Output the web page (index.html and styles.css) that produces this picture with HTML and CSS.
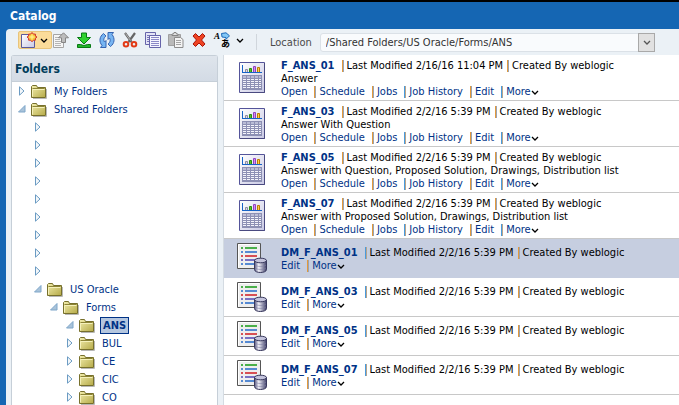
FILE: index.html
```html
<!DOCTYPE html>
<html lang="en">
<head>
  <meta charset="UTF-8">
  <meta name="viewport" content="width=device-width, initial-scale=1">
  <title>Catalog</title>
  <link rel="stylesheet" href="styles.css">
</head>
<body>

  <!-- shared icons -->
  <svg class="sprite" aria-hidden="true">
    <defs>
      <linearGradient id="gold" x1="0" y1="0" x2="1" y2="1">
        <stop offset="0" stop-color="#f3eeae"/><stop offset="1" stop-color="#b5aa48"/>
      </linearGradient>
      <linearGradient id="paper" x1="0" y1="0" x2="1" y2="1">
        <stop offset="0" stop-color="#ffffff"/><stop offset="1" stop-color="#c9c9e4"/>
      </linearGradient>
      <linearGradient id="metal" x1="0" y1="0" x2="1" y2="0">
        <stop offset="0" stop-color="#55557c"/><stop offset=".35" stop-color="#f2f2fa"/><stop offset="1" stop-color="#3d3d66"/>
      </linearGradient>
    </defs>
    <symbol id="folder" viewBox="0 0 16 15">
      <path d="M2 14.5h13.500V5" fill="none" stroke="#b8b8b8"/>
      <path d="M.5 13.500v-11l1-1h4l1 2h8v10z" fill="url(#gold)" stroke="#77702c"/>
      <path d="M1.500 4.500h12" stroke="#8c8435"/>
      <path d="M1.500 12.500v-7h12" fill="none" stroke="#f5f1bb"/>
    </symbol>
    <symbol id="closed" viewBox="0 0 8 10">
      <path d="M1.500 .8v8.400L6 5z" fill="#f3f7fa" stroke="#6b9bc3"/>
    </symbol>
    <symbol id="open" viewBox="0 0 8 10">
      <path d="M7 1.500V8H.5z" fill="#a9c3da" stroke="#7ea6c9"/>
    </symbol>
    <symbol id="chevron" viewBox="0 0 8 5">
      <path d="M1 1l3 3 3-3" fill="none" stroke="currentColor" stroke-width="1.300"/>
    </symbol>
    <symbol id="report" viewBox="0 0 26 31">
      <path d="M.5.5h25v30H.5z" fill="url(#paper)" stroke="#54549a"/>
      <path d="M25.500 1v29.500H1" fill="none" stroke="#4a4a80"/>
      <path d="M3.500 3v7.500H23" fill="none" stroke="#1763c6"/>
      <path d="M6.500 7.500h2v3h-2z" fill="#ddd" stroke="#8a8aa5"/>
      <path d="M10.500 6.500h2v4h-2z" fill="#52c522" stroke="#2c8a12"/>
      <path d="M14.500 4.500h2v6h-2z" fill="#d68af0" stroke="#9044c0"/>
      <path d="M18.500 5.500h2v5h-2z" fill="#ffd04a" stroke="#bd7b00"/>
      <path d="M3 10.500h20" stroke="#1763c6"/>
      <path d="M3 13h20v15H3z" fill="#8d90b4"/>
      <path d="M4 14h3v2H4zm4 0h3v2H8zm4 0h3v2h-3zm4 0h3v2h-3zm4 0h2v2h-2z" fill="#b9bcd6"/>
      <path d="M4 17.500h18M4 19.500h18M4 21.500h18M4 23.500h18M4 25.500h18" stroke="#f4f4fb" stroke-dasharray="3 1"/>
    </symbol>
    <symbol id="model" viewBox="0 0 30 30">
      <path d="M.5.5h23v25H.5z" fill="#eeeeee" stroke="#555"/>
      <path d="M1.500 24.500v-23h21" fill="none" stroke="#fff"/>
      <path d="M8 5h12M4 5h2" stroke="#159a15" stroke-width="1.500"/>
      <path d="M8 9h12M4 9h2" stroke="#2569c9" stroke-width="1.500"/>
      <path d="M8 13h12M4 13h2" stroke="#cf1b22" stroke-width="1.500"/>
      <path d="M8 17h10M4 17h2" stroke="#5148b5" stroke-width="1.500"/>
      <path d="M8 21h9M4 21h2" stroke="#2569c9" stroke-width="1.500"/>
      <path d="M17.500 17.500v9c0 4 12 4 12 0v-9z" fill="url(#metal)" stroke="#37375c"/>
      <ellipse cx="23.500" cy="17.500" rx="6" ry="2.300" fill="#c4c4dc" stroke="#37375c"/>
      <path d="M18 22c2 2 9 2 11 0M18 25c2 2 9 2 11 0" fill="none" stroke="#8080a4" stroke-width=".6"/>
    </symbol>
  </svg>

  <header class="titlebar"><h1>Catalog</h1></header>

  <div class="shell">
    <div class="toolbar">
      <div class="tools">
        <button class="tool tool-new" aria-label="New">
          <svg width="17" height="17" viewBox="0 0 17 17">
            <path d="M1.500 2.500h13v13h-13z" fill="url(#paper)" stroke="#5b5b9b"/>
            <path d="M12 .5l1.400 1.600h2v2L17 5l-1.600 1.200v2h-2L12 9.800l-1.400-1.600h-2v-2L7 5l1.600-.9v-2h2z" fill="#f9c83a" stroke="#d02c30"/>
            <path d="M12 2.500v5M9.500 5h5" stroke="#fff7a0"/>
          </svg>
          <svg width="8" height="5"><use href="#chevron"/></svg>
        </button>
        <button class="tool" aria-label="Up">
          <svg width="16" height="16" viewBox="0 0 16 16">
            <path d="M.5 2.500h10v13H.5z" fill="#f6f6f6" stroke="#a5a5a5"/>
            <path d="M2 5.500h4M2 7.500h5M2 9.500h6M2 11.500h6M2 13.500h6" stroke="#b5b5b5"/>
            <path d="M10.500 .8l5 5h-3v4.700h-4V5.800h-3z" fill="#bdbdbd" stroke="#858585"/>
          </svg>
        </button>
        <button class="tool" aria-label="Download">
          <svg width="16" height="16" viewBox="0 0 16 16">
            <path d="M5.500 1h5v4.500h4L8 12 1.500 5.500h4z" fill="#2fd12f" stroke="#087a14"/>
            <path d="M1.500 12.500h3l3.500 1 3.500-1h3v3h-13z" fill="#22b52b" stroke="#087a14"/>
          </svg>
        </button>
        <button class="tool" aria-label="Refresh">
          <svg width="16" height="16" viewBox="0 0 16 16">
            <path d="M7 15.500H1.500l1.500-2C-.3 9.500.5 4.500 4.500 1.500L7 4c-2.500 2-2.600 4-1.500 6l1.500-1.500z" fill="#77b5f2" stroke="#3563b0"/>
            <path d="M9 .5h5.500l-1.500 2c3.300 4 2.500 9-1.500 12L9 12c2.500-2 2.600-4 1.500-6L9 7.500z" fill="#77b5f2" stroke="#3563b0"/>
          </svg>
        </button>
        <button class="tool" aria-label="Cut">
          <svg width="16" height="16" viewBox="0 0 16 16">
            <path d="M3 1l6.500 9M13 1L6.500 10" stroke="#666" stroke-width="2.200"/>
            <path d="M3.500 1.500l5 7" stroke="#ccc" stroke-width=".8"/>
            <circle cx="4" cy="12.200" r="2.300" fill="none" stroke="#e23a16" stroke-width="2"/>
            <circle cx="12" cy="12.200" r="2.300" fill="none" stroke="#e23a16" stroke-width="2"/>
          </svg>
        </button>
        <button class="tool" aria-label="Copy">
          <svg width="16" height="16" viewBox="0 0 16 16">
            <path d="M.5.5h10v12H.5z" fill="#e4e4f6" stroke="#6664aa"/>
            <path d="M2 3.500h3M2 5.500h3M2 7.500h3M2 9.500h3" stroke="#7775b8"/>
            <path d="M4.500 3.500h11v12h-11z" fill="#f5f5ff" stroke="#6664aa"/>
            <path d="M6 5.500h8M6 7.500h8M6 9.500h8M6 11.500h8M6 13.500h8" stroke="#8a88c6"/>
          </svg>
        </button>
        <button class="tool" aria-label="Paste">
          <svg width="16" height="16" viewBox="0 0 16 16">
            <path d="M.5 2.500h12v11H.5z" fill="#b9b9b9" stroke="#a0a0a0"/>
            <path d="M4 3.500V2h1.500L6 .5h2L8.500 2H10v1.500z" fill="#e4e4e4" stroke="#858585"/>
            <path d="M6.500 5.500h6l2.500 2v8H6.500z" fill="#f4f4f4" stroke="#8c8c8c"/>
            <path d="M8 8.500h5M8 10.500h5M8 12.500h5" stroke="#a5a5a5"/>
          </svg>
        </button>
        <button class="tool" aria-label="Delete">
          <svg width="16" height="16" viewBox="0 0 16 16">
            <path d="M2 4l2.500-2.500L8 5l3.500-3.500L14 4l-3.500 4 3.500 4-2.500 2.500L8 11l-3.500 3.500L2 12l3.500-4z" fill="#ee4322" stroke="#a81509"/>
          </svg>
        </button>
        <button class="tool tool-lang" aria-label="Translate">
          <span class="lang"><i>A</i><b lang="ja">あ</b>
            <svg width="9" height="8" viewBox="0 0 9 8"><path d="M.5 1.500L5 .8l3.500 3L5 7.300V5.500L1 5z" fill="#83c8f7" stroke="#1c68b8"/></svg>
          </span>
          <svg width="8" height="5"><use href="#chevron"/></svg>
        </button>
      </div>
      <div class="location">
        <label for="location">Location</label>
        <div class="combo">
          <select id="location"><option>/Shared Folders/US Oracle/Forms/ANS</option></select>
          <span class="combo-arrow"><svg width="8" height="5"><use href="#chevron"/></svg></span>
        </div>
      </div>
    </div>

    <div class="main">
      <nav class="folders">
        <h2>Folders</h2>
        <ul class="tree">
          <li><div class="node"><svg class="twist"><use href="#closed"/></svg><svg class="folder"><use href="#folder"/></svg><a href="#">My Folders</a></div></li>
          <li>
            <div class="node"><svg class="twist"><use href="#open"/></svg><svg class="folder"><use href="#folder"/></svg><a href="#">Shared Folders</a></div>
            <ul>
              <li><div class="node"><svg class="twist"><use href="#closed"/></svg></div></li>
              <li><div class="node"><svg class="twist"><use href="#closed"/></svg></div></li>
              <li><div class="node"><svg class="twist"><use href="#closed"/></svg></div></li>
              <li><div class="node"><svg class="twist"><use href="#closed"/></svg></div></li>
              <li><div class="node"><svg class="twist"><use href="#closed"/></svg></div></li>
              <li><div class="node"><svg class="twist"><use href="#closed"/></svg></div></li>
              <li><div class="node"><svg class="twist"><use href="#closed"/></svg></div></li>
              <li><div class="node"><svg class="twist"><use href="#closed"/></svg></div></li>
              <li><div class="node"><svg class="twist"><use href="#closed"/></svg></div></li>
              <li>
                <div class="node"><svg class="twist"><use href="#open"/></svg><svg class="folder"><use href="#folder"/></svg><a href="#">US Oracle</a></div>
                <ul>
                  <li>
                    <div class="node"><svg class="twist"><use href="#open"/></svg><svg class="folder"><use href="#folder"/></svg><a href="#">Forms</a></div>
                    <ul>
                      <li><div class="node"><svg class="twist"><use href="#open"/></svg><svg class="folder"><use href="#folder"/></svg><a href="#" class="current">ANS</a></div></li>
                      <li><div class="node"><svg class="twist"><use href="#closed"/></svg><svg class="folder"><use href="#folder"/></svg><a href="#">BUL</a></div></li>
                      <li><div class="node"><svg class="twist"><use href="#closed"/></svg><svg class="folder"><use href="#folder"/></svg><a href="#">CE</a></div></li>
                      <li><div class="node"><svg class="twist"><use href="#closed"/></svg><svg class="folder"><use href="#folder"/></svg><a href="#">CIC</a></div></li>
                      <li><div class="node"><svg class="twist"><use href="#closed"/></svg><svg class="folder"><use href="#folder"/></svg><a href="#">CO</a></div></li>
                    </ul>
                  </li>
                </ul>
              </li>
            </ul>
          </li>
        </ul>
      </nav>

      <div class="items">
        <div class="item">
          <svg class="icon-report"><use href="#report"/></svg>
          <div class="info">
            <div class="meta"><a href="#" class="name">F_ANS_01</a><span>Last Modified 2/16/16 11:04 PM</span><span>Created By weblogic</span></div>
            <p>Answer</p>
            <div class="links"><a href="#">Open</a><a href="#">Schedule</a><a href="#">Jobs</a><a href="#">Job History</a><a href="#">Edit</a><a href="#">More<svg width="8" height="5"><use href="#chevron"/></svg></a></div>
          </div>
        </div>
        <div class="item">
          <svg class="icon-report"><use href="#report"/></svg>
          <div class="info">
            <div class="meta"><a href="#" class="name">F_ANS_03</a><span>Last Modified 2/2/16 5:39 PM</span><span>Created By weblogic</span></div>
            <p>Answer With Question</p>
            <div class="links"><a href="#">Open</a><a href="#">Schedule</a><a href="#">Jobs</a><a href="#">Job History</a><a href="#">Edit</a><a href="#">More<svg width="8" height="5"><use href="#chevron"/></svg></a></div>
          </div>
        </div>
        <div class="item">
          <svg class="icon-report"><use href="#report"/></svg>
          <div class="info">
            <div class="meta"><a href="#" class="name">F_ANS_05</a><span>Last Modified 2/2/16 5:39 PM</span><span>Created By weblogic</span></div>
            <p>Answer with Question, Proposed Solution, Drawings, Distribution list</p>
            <div class="links"><a href="#">Open</a><a href="#">Schedule</a><a href="#">Jobs</a><a href="#">Job History</a><a href="#">Edit</a><a href="#">More<svg width="8" height="5"><use href="#chevron"/></svg></a></div>
          </div>
        </div>
        <div class="item">
          <svg class="icon-report"><use href="#report"/></svg>
          <div class="info">
            <div class="meta"><a href="#" class="name">F_ANS_07</a><span>Last Modified 2/2/16 5:39 PM</span><span>Created By weblogic</span></div>
            <p>Answer with Proposed Solution, Drawings, Distribution list</p>
            <div class="links"><a href="#">Open</a><a href="#">Schedule</a><a href="#">Jobs</a><a href="#">Job History</a><a href="#">Edit</a><a href="#">More<svg width="8" height="5"><use href="#chevron"/></svg></a></div>
          </div>
        </div>
        <div class="item model selected">
          <svg class="icon-model"><use href="#model"/></svg>
          <div class="info">
            <div class="meta"><a href="#" class="name">DM_F_ANS_01</a><span>Last Modified 2/2/16 5:39 PM</span><span>Created By weblogic</span></div>
            <div class="links"><a href="#">Edit</a><a href="#">More<svg width="8" height="5"><use href="#chevron"/></svg></a></div>
          </div>
        </div>
        <div class="item model">
          <svg class="icon-model"><use href="#model"/></svg>
          <div class="info">
            <div class="meta"><a href="#" class="name">DM_F_ANS_03</a><span>Last Modified 2/2/16 5:39 PM</span><span>Created By weblogic</span></div>
            <div class="links"><a href="#">Edit</a><a href="#">More<svg width="8" height="5"><use href="#chevron"/></svg></a></div>
          </div>
        </div>
        <div class="item model">
          <svg class="icon-model"><use href="#model"/></svg>
          <div class="info">
            <div class="meta"><a href="#" class="name">DM_F_ANS_05</a><span>Last Modified 2/2/16 5:39 PM</span><span>Created By weblogic</span></div>
            <div class="links"><a href="#">Edit</a><a href="#">More<svg width="8" height="5"><use href="#chevron"/></svg></a></div>
          </div>
        </div>
        <div class="item model">
          <svg class="icon-model"><use href="#model"/></svg>
          <div class="info">
            <div class="meta"><a href="#" class="name">DM_F_ANS_07</a><span>Last Modified 2/2/16 5:39 PM</span><span>Created By weblogic</span></div>
            <div class="links"><a href="#">Edit</a><a href="#">More<svg width="8" height="5"><use href="#chevron"/></svg></a></div>
          </div>
        </div>
      </div>
    </div>
  </div>

</body>
</html>
```
FILE: styles.css
```css
* {
  box-sizing: border-box;
}
body {
  margin: 0;
  min-height: 100vh;
  display: flex;
  flex-direction: column;
  background: #1566b3;
  border-top: 2px solid #000;
  font-family: Tahoma, "DejaVu Sans Condensed", "DejaVu Sans", sans-serif;
  font-size: 11px;
  line-height: 13px;
  color: #000;
}
h1, h2, p, ul {
  margin: 0;
  padding: 0;
}
ul {
  list-style: none;
}
a {
  color: #003286;
  text-decoration: none;
}
a:hover {
  text-decoration: underline;
}
svg {
  flex: none;
}
.sprite {
  position: absolute;
  width: 0;
  height: 0;
}
.titlebar {
  padding: 6px 10px 5px;
}
.titlebar h1 {
  font-size: 12px;
  line-height: 16px;
  color: #fff;
}
.shell {
  flex: 1;
  display: flex;
  flex-direction: column;
  margin-left: 6px;
  padding-left: 5px;
  background: #ebf1f6;
  border-top-left-radius: 4px;
}

/* toolbar */
.toolbar {
  display: flex;
  align-items: center;
  height: 26px;
}
.tools {
  display: flex;
  align-items: center;
  gap: 7px;
  padding: 0 12px 4px 7px;
}
.tool {
  display: flex;
  align-items: center;
  justify-content: center;
  height: 18px;
  padding: 0;
  border: 0;
  background: none;
  color: #000;
}
.tool-new {
  gap: 3px;
  padding: 0 3px 0 1px;
  margin-right: -6px;
  background: #fbdc9a;
  border: 1px solid #e8c47b;
  border-radius: 2px;
}
.tool-lang {
  gap: 6px;
}
.lang {
  position: relative;
  width: 16px;
  height: 16px;
}
.lang i, .lang b, .lang svg {
  position: absolute;
}
.lang i {
  left: 0;
  top: 0;
  font: bold italic 9px/9px "Liberation Serif", serif;
}
.lang b {
  right: 0;
  bottom: 0;
  font: bold 9px/9px "Noto Sans CJK JP", sans-serif;
}
.lang svg {
  right: 0;
  top: 0;
}
.location {
  flex: 1;
  display: flex;
  align-items: center;
  gap: 8px;
  height: 16px;
  padding: 0 24px 0 13px;
  border-left: 1px solid #d0d6dc;
  color: #4a4a4a;
}
.combo {
  position: relative;
  flex: 1;
}
.combo select {
  display: block;
  width: 100%;
  height: 19px;
  padding: 0 22px 0 5px;
  border: 1px solid #dbe1e7;
  border-radius: 3px;
  background: #f9fbfd;
  font: inherit;
  color: #333;
  appearance: none;
}
.combo-arrow {
  position: absolute;
  top: 0;
  right: 0;
  width: 17px;
  height: 19px;
  display: flex;
  align-items: center;
  justify-content: center;
  border: 1px solid #a9a9a9;
  background: #e1e1e1;
  color: #555;
  pointer-events: none;
}

/* folder tree */
.main {
  flex: 1;
  display: flex;
  gap: 5px;
}
.folders {
  flex: none;
  width: 207px;
  background: #fff;
  border: 1px solid #c6cfd8;
  border-bottom: 0;
  border-radius: 3px 3px 0 0;
}
.folders h2 {
  padding: 5px 3px 3px;
  font-size: 12px;
  line-height: 17px;
  color: #003d5b;
  background: linear-gradient(#dfe5ec, #d3dbe5);
  border-bottom: 1px solid #c6cfd8;
}
.tree {
  padding-left: 6px;
}
.tree ul {
  padding-left: 16px;
}
.node {
  display: flex;
  align-items: center;
  height: 18px;
}
.twist {
  width: 8px;
  height: 10px;
  margin-right: 5px;
}
.folder {
  width: 16px;
  height: 15px;
  margin-right: 5px;
}
.node a {
  padding: 1px 2px;
}
.node .current {
  font-weight: bold;
  background: #b4c6df;
  border: 1px solid #003286;
}

/* catalog items */
.items {
  flex: 1;
  background: #fff;
  border-left: 1px solid #d4dbe2;
}
.item {
  display: grid;
  grid-template-columns: 57px 1fr;
  align-items: center;
  padding: 2px 0;
  border-bottom: 1px solid #c8c8c8;
}
.model {
  padding: 4px 0;
}
.selected {
  background: #c6cee0;
  border-bottom-color: #c6cee0;
}
.icon-report {
  width: 26px;
  height: 31px;
  margin-left: 15px;
}
.icon-model {
  width: 30px;
  height: 30px;
  margin-left: 13px;
}
.info {
  padding-top: 2px;
  white-space: nowrap;
}
.meta, .links {
  display: flex;
}
/* two-tone divider in front of every entry but the first */
.meta > * + *, .links > * + * {
  margin-left: 7px;
  padding-left: 5px;
  background: linear-gradient(90deg, #e39a3c 1px, #9aa4b4 1px) no-repeat 0 1px / 2px 12px;
}
.links > :nth-child(4), .links > :nth-child(6), .model .meta > :nth-child(2) {
  background-image: linear-gradient(90deg, #4a9bdd 1px, #b9a48a 1px);
}
.meta > :nth-child(3) {
  margin-left: 4px;
}
.name {
  font-weight: bold;
}
.links svg {
  color: #000;
}
```
